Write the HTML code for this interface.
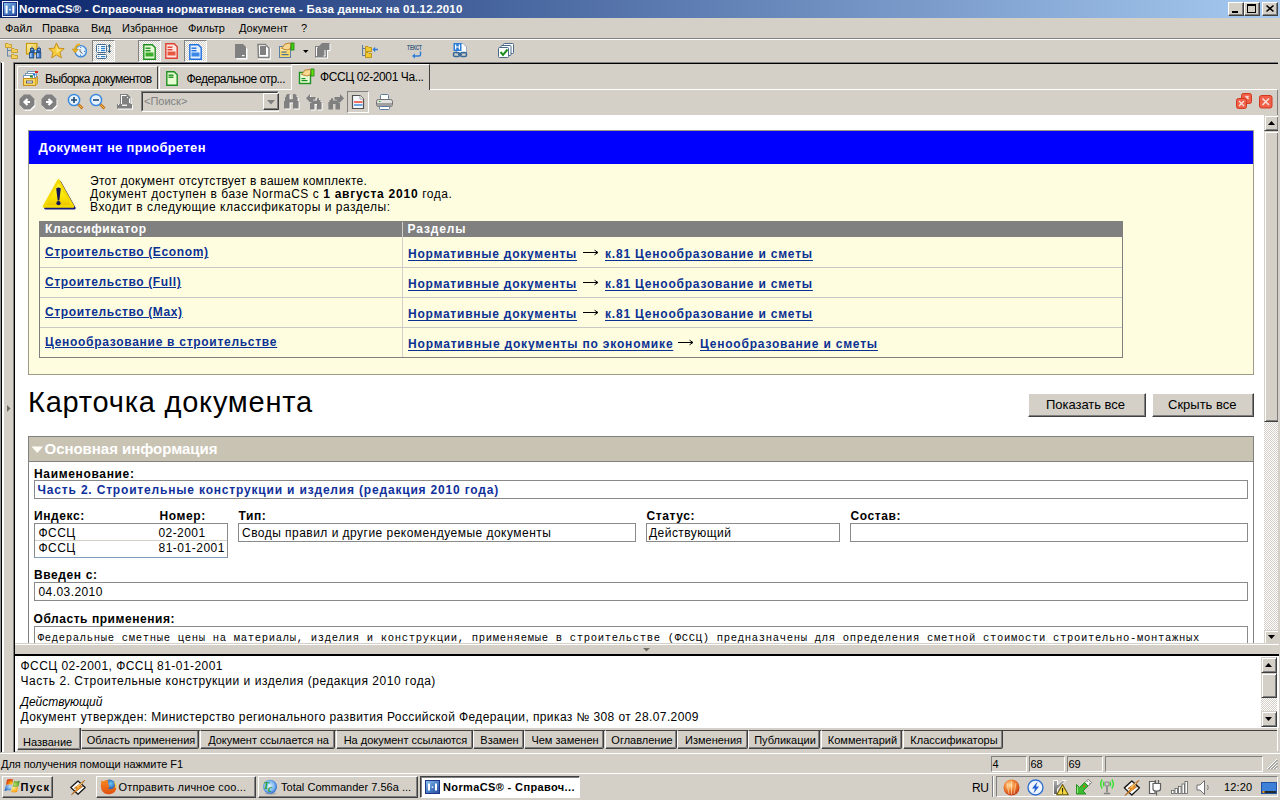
<!DOCTYPE html>
<html><head><meta charset="utf-8"><style>
*{margin:0;padding:0;box-sizing:border-box}
html,body{width:1280px;height:800px;overflow:hidden;background:#D4D0C8;font-family:"Liberation Sans",sans-serif;position:relative}
.a{position:absolute}
.t{position:absolute;white-space:nowrap;line-height:1}
.raised{background:#D4D0C8;border-style:solid;border-width:1px;border-color:#fff #404040 #404040 #fff;box-shadow:inset -1px -1px 0 #808080}
.sunk{border-style:solid;border-width:1px;border-color:#808080 #fff #fff #808080}
.lnk{color:#0B3193;text-decoration:underline;text-underline-offset:1.5px}
.fb{position:absolute;border:1px solid #8A8A8A;background:#fff}
.chk{background-color:#fff;background-image:linear-gradient(45deg,#D4D0C8 25%,transparent 25%,transparent 75%,#D4D0C8 75%),linear-gradient(45deg,#D4D0C8 25%,transparent 25%,transparent 75%,#D4D0C8 75%);background-size:2px 2px;background-position:0 0,1px 1px}
.sbt{background:#D4D0C8;border-style:solid;border-width:1px;border-color:#D4D0C8 #404040 #404040 #D4D0C8;box-shadow:inset 1px 1px 0 #fff,inset -1px -1px 0 #808080}
.pressed{border-style:solid;border-width:1px;border-color:#808080 #fff #fff #808080}
svg{position:absolute;overflow:visible}
</style></head><body>
<div class="a" style="left:0px;top:0px;width:1280px;height:18px;background:linear-gradient(90deg,#0A246A 0%,#A6CAF0 100%);"></div>
<svg style="left:2px;top:1px" width="16" height="16" viewBox="0 0 16 16"><defs><linearGradient id="ai" x1="0" y1="0" x2="1" y2="1"><stop offset="0" stop-color="#8CC0EC"/><stop offset="0.5" stop-color="#4A80C8"/><stop offset="1" stop-color="#2A4EA0"/></linearGradient></defs><rect x="0" y="0" width="16" height="16" fill="#F0F4FA"/><rect x="1" y="1" width="14" height="14" fill="#1E3488"/><rect x="2" y="2" width="12" height="12" fill="url(#ai)"/><rect x="3.6" y="4.6" width="2" height="7.8" fill="#fff"/><rect x="10.3" y="4.6" width="2" height="7.8" fill="#fff"/><rect x="7.2" y="7.8" width="1.6" height="1.6" fill="#E8F0FC"/></svg>
<div class="t" style="left:19px;top:4px;font-size:11.5px;color:#fff;font-weight:bold;letter-spacing:0.20px;">NormaCS® - Справочная нормативная система - База данных на 01.12.2010</div><div class="a raised" style="left:1228px;top:2px;width:16px;height:14px"></div><div class="a raised" style="left:1244px;top:2px;width:16px;height:14px"></div><div class="a raised" style="left:1262px;top:2px;width:16px;height:14px"></div><div class="a" style="left:1232px;top:11px;width:6px;height:2px;background:#000;"></div>
<div class="a" style="left:1247px;top:4px;width:9px;height:9px;background:transparent;border:1px solid #000;border-top-width:2px"></div>
<svg style="left:1266px;top:5px" width="8" height="7"><path d="M0.5 0.5 L7.5 6.5 M7.5 0.5 L0.5 6.5" stroke="#000" stroke-width="1.6"/></svg><div class="t" style="left:5px;top:23px;font-size:11px;color:#000;">Файл</div><div class="t" style="left:42px;top:23px;font-size:11px;color:#000;">Правка</div><div class="t" style="left:91px;top:23px;font-size:11px;color:#000;">Вид</div><div class="t" style="left:122px;top:23px;font-size:11px;color:#000;">Избранное</div><div class="t" style="left:188px;top:23px;font-size:11px;color:#000;">Фильтр</div><div class="t" style="left:239px;top:23px;font-size:11px;color:#000;">Документ</div><div class="t" style="left:301px;top:23px;font-size:11px;color:#000;">?</div><div class="a" style="left:0px;top:38px;width:1280px;height:1px;background:#808080;"></div>
<div class="a" style="left:0px;top:39px;width:1280px;height:1px;background:#fff;"></div>
<div class="a chk" style="left:92px;top:40px;width:23px;height:22px;border-style:solid;border-width:1px;border-color:#808080 #fff #fff #808080"></div>
<div class="a chk" style="left:138px;top:40px;width:23px;height:22px;border-style:solid;border-width:1px;border-color:#808080 #fff #fff #808080"></div>
<div class="a chk" style="left:184px;top:40px;width:23px;height:22px;border-style:solid;border-width:1px;border-color:#808080 #fff #fff #808080"></div>
<svg style="left:4px;top:42px" width="16" height="17" viewBox="0 0 16 17"><path d="M3.5 5 V14.5 M3.5 8.5 H7 M3.5 14 H7" stroke="#6C88A8" stroke-width="1" fill="none"/><path d="M1.5 1.5 H4 L5 2.5 H7.5 V5.5 H1.5 Z" fill="#F4D060" stroke="#C8A030"/><path d="M7.5 6.5 H10 L11 7.5 H13.5 V10.5 H7.5 Z" fill="#F4D060" stroke="#C8A030"/><path d="M7.5 12.5 H10 L11 13.5 H13.5 V16.5 H7.5 Z" fill="#F4D060" stroke="#C8A030"/></svg>
<svg style="left:24px;top:40px" width="20" height="20" viewBox="0 0 20 20"><defs><linearGradient id="bfg" x1="0" y1="0" x2="1" y2="1"><stop offset="0" stop-color="#FFF6B0"/><stop offset="1" stop-color="#E8B820"/></linearGradient></defs><rect x="2.5" y="3.5" width="10.5" height="10.5" fill="url(#bfg)" stroke="#C8980C" stroke-width="1.2"/><path d="M7 9 L8 6 L9 9 Z M14 9 L15 6 L16 9 Z" fill="#1E4A80"/><rect x="6.5" y="8.5" width="3" height="3.5" fill="#2E6AB8" stroke="#1E4A80" stroke-width="0.8"/><rect x="13.5" y="8.5" width="3" height="3.5" fill="#2E6AB8" stroke="#1E4A80" stroke-width="0.8"/><rect x="9.5" y="10" width="4" height="2.5" fill="#4A88D8" stroke="#1E4A80" stroke-width="0.6"/><rect x="11" y="10.5" width="1" height="1.6" fill="#fff"/><rect x="5.4" y="12.4" width="4.4" height="5.6" fill="#3C7CD0" stroke="#1E4A80" stroke-width="0.8"/><rect x="12.4" y="12.4" width="4.4" height="5.6" fill="#3C7CD0" stroke="#1E4A80" stroke-width="0.8"/><rect x="6.3" y="13.2" width="1.1" height="3.8" fill="#D0E6FF"/><rect x="13.3" y="13.2" width="1.1" height="3.8" fill="#D0E6FF"/><circle cx="8" cy="9.3" r="0.6" fill="#fff"/><circle cx="15" cy="9.3" r="0.6" fill="#fff"/></svg>
<svg style="left:48px;top:42px" width="17" height="17" viewBox="0 0 17 17"><path d="M8.5 1 L10.8 6.2 L16.2 6.6 L12 10.2 L13.4 15.8 L8.5 12.8 L3.6 15.8 L5 10.2 L0.8 6.6 L6.2 6.2 Z" fill="#F6CC3C" stroke="#C8901A" stroke-width="1"/><path d="M8.5 3.5 L10 7.5 L13.5 7.8 L8.5 11 Z" fill="#FFF0A0" opacity="0.7"/></svg>
<svg style="left:68px;top:40px" width="20" height="20" viewBox="0 0 20 20"><circle cx="12.75" cy="11.25" r="5.6" fill="#E4F0FC" stroke="#3A88D8" stroke-width="1.4"/><circle cx="12.5" cy="7.5" r="0.6" fill="#2A70C0"/><circle cx="16.5" cy="11.3" r="0.6" fill="#2A70C0"/><circle cx="12.5" cy="15.2" r="0.6" fill="#2A70C0"/><path d="M12 9.3 V11.5 L14.5 13.5" stroke="#505050" stroke-width="0.9" fill="none"/><path d="M12 4.5 Q8 4.5 7.2 8.5 L7.2 9.5" stroke="#E8B020" stroke-width="2" fill="none"/><path d="M4 9 H10.5 L7.2 13 Z" fill="#E8B020" stroke="#C08810" stroke-width="0.5"/></svg>
<svg style="left:92px;top:40px" width="22" height="22" viewBox="0 0 22 22"><rect x="4.5" y="4.5" width="10" height="8" rx="1" fill="#fff" stroke="#4A6A8A"/><circle cx="6.7" cy="6.6" r="0.7" fill="#2A80D0"/><rect x="9" y="6" width="4.2" height="1.2" fill="#2A80D0"/><circle cx="6.7" cy="8.6" r="0.7" fill="#2A80D0"/><rect x="9" y="8" width="4.2" height="1.2" fill="#2A80D0"/><circle cx="6.7" cy="10.6" r="0.7" fill="#2A80D0"/><rect x="9" y="10" width="4.2" height="1.2" fill="#2A80D0"/><rect x="4.5" y="14.5" width="10" height="4" rx="1" fill="#fff" stroke="#4A6A8A"/><circle cx="6.7" cy="16.5" r="0.7" fill="#2A80D0"/><rect x="9" y="16" width="4.2" height="1.2" fill="#2A80D0"/><path d="M17.4 4 L19.4 6.5 H15.4 Z M17.4 13.2 L19.4 10.7 H15.4 Z" fill="#2F5A78"/><rect x="16.9" y="6" width="1" height="5" fill="#2F5A78"/></svg>
<svg style="left:143px;top:44px" width="13" height="16" viewBox="0 0 13 16"><path d="M0.8 0.8 h8.4 l3 3 v11.4 h-11.4 z" fill="#E8FCD8" stroke="#1E9020" stroke-width="1.4"/><rect x="2.5" y="3.5" width="5" height="1.4" fill="#1E9020"/><rect x="2.5" y="6" width="5" height="1.4" fill="#1E9020"/><rect x="2.5" y="8.5" width="8" height="4" fill="#3AAE2A"/></svg>
<svg style="left:165px;top:43px" width="13" height="16" viewBox="0 0 13 16"><path d="M0.8 0.8 h8.4 l3 3 v11.4 h-11.4 z" fill="#FCE4E0" stroke="#E04030" stroke-width="1.4"/><rect x="2.5" y="3.5" width="5" height="1.4" fill="#E04030"/><rect x="2.5" y="6" width="5" height="1.4" fill="#E04030"/><rect x="2.5" y="8.5" width="8" height="4" fill="#E85840"/></svg>
<svg style="left:189px;top:44px" width="13" height="16" viewBox="0 0 13 16"><path d="M0.8 0.8 h8.4 l3 3 v11.4 h-11.4 z" fill="#E4F0FC" stroke="#2070E0" stroke-width="1.4"/><rect x="2.5" y="3.5" width="5" height="1.4" fill="#2070E0"/><rect x="2.5" y="6" width="5" height="1.4" fill="#2070E0"/><rect x="2.5" y="8.5" width="8" height="4" fill="#3A88E8"/></svg>
<svg style="left:234px;top:43px" width="14" height="17" viewBox="0 0 14 17"><path d="M1.5 1.5 H9 L12.5 5 V15.5 H1.5 Z" fill="#fff" transform="translate(1,1)"/><path d="M1 1 H9 L12 4 V15 H1 Z" fill="#808080"/><rect x="8" y="12" width="2.5" height="1.2" fill="#fff"/></svg>
<svg style="left:257px;top:43px" width="14" height="17" viewBox="0 0 14 17"><path d="M2 2 H9.5 L13 5.5 V16 H2 Z" fill="none" stroke="#fff" stroke-width="1.5"/><path d="M1 1.5 H8.5 L12 5 V14.5 H1.5 Z" fill="#fff" stroke="#808080" stroke-width="1.5"/><rect x="3" y="3" width="6" height="9" fill="#808080"/></svg>
<svg style="left:278px;top:42px" width="17" height="17" viewBox="0 0 17 17"><rect x="1.5" y="4.5" width="11" height="11" fill="#F8D868" stroke="#5A80A8"/><rect x="2.5" y="5.5" width="9" height="3" fill="#FFF4C0"/><rect x="3.5" y="9.5" width="5" height="1.2" fill="#4A70A0"/><rect x="3.5" y="12" width="7" height="1.2" fill="#4A70A0"/><path d="M3.5 6.5 L7 2 L12 1 L13 3 L12 7 L9 8 Z" fill="#F8D890" stroke="#B87A20" stroke-width="0.9"/><rect x="13" y="1" width="3" height="7" fill="#40D010" stroke="#208010" stroke-width="0.8"/></svg>
<svg style="left:303px;top:50px" width="6" height="4" viewBox="0 0 6 4"><path d="M0 0 H5.5 L2.75 3 Z" fill="#000"/></svg>
<svg style="left:312px;top:40px" width="22" height="22" viewBox="0 0 22 22"><path transform="translate(1,1)" d="M10 3 H17.5 V10 H15 V17.5 H3 V6 H7 L10 3 Z" fill="#fff"/><path d="M10 3 H17.5 V10 H15 V17.5 H3 V6 H7 L10 3 Z" fill="#808080"/><rect x="4" y="7" width="1" height="9" fill="#fff"/><rect x="4" y="7" width="1.5" height="1" fill="#fff"/><rect x="12.5" y="10" width="1" height="6" fill="#fff"/><rect x="11.5" y="15.5" width="2" height="1" fill="#fff"/></svg>
<svg style="left:360px;top:44px" width="19" height="14" viewBox="0 0 19 14"><path d="M2.5 1 V11.5 H5 M2.5 4.5 H5" stroke="#5878A0" stroke-width="1" fill="none"/><path d="M5.5 2.5 H8 L9 3.5 H11.5 V7.5 H5.5 Z" fill="#F0C830" stroke="#B89010" stroke-width="0.9"/><path d="M5.5 8.5 H8 L9 9.5 H11.5 V13.5 H5.5 Z" fill="#F0C830" stroke="#B89010" stroke-width="0.9"/><path d="M12.5 5.5 L15.2 2.8 V4.8 H18 V6.2 H15.2 V8.2 Z" fill="#2C7CD8"/></svg>
<svg style="left:405px;top:44px" width="19" height="15" viewBox="0 0 19 15"><text x="2" y="6.3" font-family="Liberation Sans" font-size="7.2" font-weight="bold" fill="#3A5A7C" textLength="15" lengthAdjust="spacingAndGlyphs">ТЕКСТ</text><path d="M15.5 7.5 V10.5 Q15.5 12 14 12 H9" stroke="#2C7CD8" stroke-width="1.5" fill="none"/><path d="M7 12 L10 9.5 V14.5 Z" fill="#2C7CD8"/></svg>
<svg style="left:452px;top:42px" width="17" height="17" viewBox="0 0 17 17"><path d="M4.5 1.5 H11 L14.5 5 V11.5 H4.5 Z" fill="#fff" stroke="#98A8B8"/><rect x="1.5" y="1" width="8" height="8" fill="#2C7CD8"/><rect x="3" y="2.5" width="1.2" height="5" fill="#fff"/><rect x="6.8" y="2.5" width="1.2" height="5" fill="#fff"/><rect x="4" y="4.5" width="3" height="1" fill="#fff"/><rect x="1.5" y="10.5" width="6" height="4" rx="1.5" fill="none" stroke="#3A6A98" stroke-width="1.5"/><rect x="8.5" y="10.5" width="6" height="4" rx="1.5" fill="none" stroke="#3A6A98" stroke-width="1.5"/><rect x="6" y="11.8" width="4" height="1.4" fill="#3A6A98"/></svg>
<svg style="left:497px;top:42px" width="18" height="17" viewBox="0 0 18 17"><rect x="6.5" y="1.5" width="10" height="10" rx="1" fill="#fff" stroke="#4A6A8A"/><rect x="4" y="3.5" width="10" height="10" rx="1" fill="#fff" stroke="#4A6A8A"/><rect x="1.5" y="5.5" width="10" height="10" rx="1" fill="#fff" stroke="#4A6A8A"/><path d="M3.5 10 L6 13 L10.5 7.5" stroke="#1E9020" stroke-width="2" fill="none"/></svg>
<div class="a" style="left:0px;top:62px;width:1px;height:691px;background:#909090;"></div>
<div class="a" style="left:1px;top:63px;width:1px;height:689px;background:#000;"></div>
<div class="a" style="left:2px;top:62px;width:2px;height:690px;background:#fff;"></div>
<div class="a" style="left:13px;top:62px;width:1px;height:690px;background:#808080;"></div>
<div class="a" style="left:13px;top:62px;width:1266px;height:1px;background:#808080;"></div>
<div class="a" style="left:14px;top:63px;width:1265px;height:1px;background:#000;"></div>
<div class="a" style="left:14px;top:63px;width:1px;height:689px;background:#000;"></div>
<svg style="left:7px;top:405px" width="4" height="7"><path d="M0 0 L3.5 3.5 L0 7 Z" fill="#6E6E64"/></svg><div class="a" style="left:17px;top:66px;width:141px;height:23px;border-left:1px solid #fff;border-top:1px solid #fff;border-right:1px solid #404040;border-top-left-radius:2px"></div><div class="t" style="left:45px;top:73px;font-size:12px;color:#000;letter-spacing:-0.60px;">Выборка документов</div><div class="a" style="left:159px;top:66px;width:134px;height:23px;border-left:1px solid #fff;border-top:1px solid #fff;border-top-left-radius:2px"></div><div class="t" style="left:186.50px;top:73px;font-size:12px;color:#000;letter-spacing:-0.51px;">Федеральное отр...</div><div class="a" style="left:15px;top:89px;width:277px;height:1px;background:#fff;"></div>
<div class="a" style="left:430px;top:89px;width:847px;height:1px;background:#fff;"></div>
<div class="a" style="left:1278px;top:63px;width:1px;height:52px;background:#fff;"></div>
<div class="a" style="left:1277px;top:90px;width:1px;height:25px;background:#808080;"></div>
<div class="a" style="left:291px;top:64px;width:139px;height:26px;background:#D4D0C8;border-left:1px solid #fff;border-top:1px solid #fff;border-right:1px solid #404040;border-top-left-radius:2px"></div><div class="t" style="left:320px;top:71px;font-size:12px;color:#000;letter-spacing:-0.40px;">ФССЦ 02-2001 Ча...</div><svg style="left:22px;top:70px" width="17" height="17" viewBox="0 0 17 17"><rect x="5.5" y="1.5" width="9" height="6" fill="#fff" stroke="#7898B8"/><rect x="13" y="1" width="3" height="2" fill="#E03020"/><rect x="3.5" y="3.5" width="9" height="6" fill="#fff" stroke="#7898B8"/><rect x="11" y="3.5" width="2.5" height="2" fill="#2C7CD8"/><rect x="1.5" y="5.5" width="9" height="6" fill="#fff" stroke="#7898B8"/><rect x="8" y="5.5" width="2.5" height="2" fill="#1E9020"/><rect x="1.5" y="8.5" width="12" height="7" fill="#F8D860" stroke="#C8901A"/><path d="M13.5 8.5 L15.5 6.5 V13.5 L13.5 15.5" fill="#E8C040" stroke="#C8901A" stroke-width="0.8"/><rect x="4.5" y="11" width="6" height="2" fill="#fff" stroke="#404870" stroke-width="0.8"/></svg>
<svg style="left:166px;top:71px" width="13" height="16" viewBox="0 0 13 16"><path d="M0.8 0.8 h7.4 l3 3 v10.4 h-10.4 z" fill="#E4FCD0" stroke="#1E9020" stroke-width="1.4"/><rect x="2.5" y="3.5" width="5" height="1.4" fill="#1E9020"/><rect x="2.5" y="5.5" width="5" height="1.4" fill="#1E9020"/></svg>
<svg style="left:298px;top:68px" width="17" height="17" viewBox="0 0 17 17"><rect x="1.5" y="4.5" width="11" height="11" fill="#E8FCD8" stroke="#1E9020" stroke-width="1.4"/><rect x="3.5" y="10" width="4" height="1.2" fill="#1E9020"/><rect x="3.5" y="12" width="6" height="1.2" fill="#1E9020"/><path d="M3.5 6.5 L7 2 L12 1.5 L13 3 L12 7 L9 8 Z" fill="#F8D890" stroke="#B87A20" stroke-width="0.9"/><rect x="13" y="1" width="3" height="7" fill="#60E010" stroke="#208010" stroke-width="0.8"/></svg>
<div class="a" style="left:141px;top:91px;width:138px;height:21px;border-style:solid;border-width:1px;border-color:#808080 #fff #fff #808080"></div><div class="a" style="left:142px;top:92px;width:136px;height:19px;border-style:solid;border-width:1px;border-color:#404040 #D4D0C8 #D4D0C8 #404040"></div><div class="t" style="left:144px;top:96px;font-size:11px;color:#808080;">&lt;Поиск&gt;</div><div class="a raised" style="left:263px;top:93px;width:16px;height:17px"></div><svg style="left:267px;top:100px" width="8" height="5"><path d="M0 0 L8 0 L4 4.5 Z" fill="#808080"/></svg><svg style="left:19px;top:94px" width="17" height="17" viewBox="0 0 17 17"><path d="M5 1 H11 L15.5 5.5 V11.5 L11 16 H5 L0.5 11.5 V5.5 Z" fill="#fff" transform="translate(0.8,0.8)"/><path d="M5 0.5 H11 L15.5 5 V11 L11 15.5 H5 L0.5 11 V5 Z" fill="#808080"/><path d="M11 8 H6 M8.5 5 L5.5 8 L8.5 11" stroke="#fff" stroke-width="2.2" fill="none"/></svg>
<svg style="left:41px;top:94px" width="17" height="17" viewBox="0 0 17 17"><path d="M5 1 H11 L15.5 5.5 V11.5 L11 16 H5 L0.5 11.5 V5.5 Z" fill="#fff" transform="translate(0.8,0.8)"/><path d="M5 0.5 H11 L15.5 5 V11 L11 15.5 H5 L0.5 11 V5 Z" fill="#808080"/><path d="M5 8 H10 M7.5 5 L10.5 8 L7.5 11" stroke="#fff" stroke-width="2.2" fill="none"/></svg>
<svg style="left:67px;top:93px" width="18" height="18" viewBox="0 0 18 18"><path d="M10.5 10.5 L15.5 15.5" stroke="#C87018" stroke-width="2.6"/><path d="M11.5 11.5 L15 15" stroke="#F0C040" stroke-width="1"/><circle cx="7" cy="7" r="5.6" fill="#E8F2FC" stroke="#3A8AE0" stroke-width="1.5"/><path d="M4 7 H10 M7 4 V10" stroke="#1E4870" stroke-width="1.6"/></svg>
<svg style="left:89px;top:93px" width="18" height="18" viewBox="0 0 18 18"><path d="M10.5 10.5 L15.5 15.5" stroke="#C87018" stroke-width="2.6"/><path d="M11.5 11.5 L15 15" stroke="#F0C040" stroke-width="1"/><circle cx="7" cy="7" r="5.6" fill="#E8F2FC" stroke="#3A8AE0" stroke-width="1.5"/><path d="M4 7 H10" stroke="#1E4870" stroke-width="1.6"/></svg>
<svg style="left:114px;top:91px" width="22" height="22" viewBox="0 0 22 22"><path transform="translate(1,1)" d="M6 3 H13.5 L16.5 6 V13 H18 V17.5 H3 V13 H6 Z" fill="#fff"/><path d="M6 3 H13.5 L16.5 6 V13 H18 V17.5 H3 V13 H6 Z" fill="#808080"/><rect x="7" y="4" width="1" height="9" fill="#fff"/><rect x="7" y="4" width="5.5" height="1" fill="#fff"/><rect x="13" y="6" width="1" height="1" fill="#fff"/><rect x="15" y="7.5" width="1" height="4.5" fill="#fff"/><rect x="8" y="13.6" width="5" height="1.3" fill="#fff"/><rect x="4" y="13" width="1" height="1" fill="#fff"/></svg>
<svg style="left:282px;top:91px" width="20" height="20" viewBox="0 0 20 20"><path d="M5 3 H7.6 V8.3 H11 V3 H13.6 V4 H14.6 V6 H15.6 V10 H16.6 V17.6 H11 V11.5 H7.6 V17.6 H2 V10 H3 V6 H4 V4 H5 Z" fill="#fff" transform="translate(1,1)"/><path d="M5 3 H7.6 V8.3 H11 V3 H13.6 V4 H14.6 V6 H15.6 V10 H16.6 V17.6 H11 V11.5 H7.6 V17.6 H2 V10 H3 V6 H4 V4 H5 Z" fill="#808080"/></svg>
<svg style="left:304px;top:91px" width="20" height="21" viewBox="0 0 20 21"><path d="M6 3 V6 H11.5 V8.8 H9 V9.5 H13 V7.3 H15 V9 H16.5 V11 H17.6 V18.6 H13 V13 H10.5 V18.6 H6 V12 H7.5 V11.5 H6 L2 7.3 Z" fill="#fff" transform="translate(1,1)"/><path d="M6 3 V6 H11.5 V8.8 H9 V9.5 H13 V7.3 H15 V9 H16.5 V11 H17.6 V18.6 H13 V13 H10.5 V18.6 H6 V12 H7.5 V11.5 H6 L2 7.3 Z" fill="#808080"/></svg>
<svg style="left:326px;top:91px" width="20" height="21" viewBox="0 0 20 21"><g transform="translate(20,0) scale(-1,1)"><path d="M6 3 V6 H11.5 V8.8 H9 V9.5 H13 V7.3 H15 V9 H16.5 V11 H17.6 V18.6 H13 V13 H10.5 V18.6 H6 V12 H7.5 V11.5 H6 L2 7.3 Z" fill="#808080"/></g><g transform="translate(21,1) scale(-1,1)"><path d="M6 3 V6 H11.5 V8.8 H9 V9.5 H13 V7.3 H15 V9 H16.5 V11 H17.6 V18.6 H13 V13 H10.5 V18.6 H6 V12 H7.5 V11.5 H6 L2 7.3 Z" fill="#fff" opacity="0"/></g></svg>
<div class="a" style="left:347px;top:91px;width:22px;height:22px;border-style:solid;border-width:1px;border-color:#808080 #fff #fff #808080"></div>
<svg style="left:351px;top:94px" width="14" height="16" viewBox="0 0 14 16"><path d="M1.5 1.5 H9 L12.5 5 V14.5 H1.5 Z" fill="#F4F8FC" stroke="#505050" stroke-width="1.2"/><path d="M9 1.5 V5 H12.5" fill="#fff" stroke="#909090" stroke-width="0.8"/><rect x="3" y="7" width="8.5" height="2" fill="#F07060"/><rect x="3" y="10" width="8.5" height="2" fill="#70A8E0"/></svg>
<svg style="left:376px;top:94px" width="17" height="16" viewBox="0 0 17 16"><rect x="4.5" y="0.5" width="8" height="5" rx="1" fill="#fff" stroke="#5A7AA0"/><rect x="0.5" y="5.5" width="16" height="7" rx="2" fill="#E0E0E0" stroke="#707070"/><rect x="1" y="9" width="15" height="3" fill="#A0A0A0"/><rect x="3" y="7" width="1.5" height="1" fill="#20B020"/><rect x="3.5" y="12.5" width="10" height="3" rx="1" fill="#fff" stroke="#5A7AA0"/></svg>
<svg style="left:1236px;top:93px" width="18" height="17" viewBox="0 0 18 17"><rect x="5.5" y="0.5" width="10" height="10" rx="2" fill="#F06048" stroke="#D03820"/><rect x="0.5" y="5.5" width="10" height="10" rx="2" fill="#F06048" stroke="#D03820"/><path d="M3 8 L8 13 M8 8 L3 13 M9.5 3 L12.5 6 M12.5 3 L10.5 5" stroke="#F8E0D8" stroke-width="1.4"/></svg>
<svg style="left:1259px;top:95px" width="14" height="14" viewBox="0 0 14 14"><rect x="0.5" y="0.5" width="12.5" height="12.5" rx="2" fill="#F06048" stroke="#D03820"/><path d="M3.5 3.5 L10 10 M10 3.5 L3.5 10" stroke="#F8E0D8" stroke-width="1.6"/></svg>
<div class="a" style="left:15px;top:115px;width:1249px;height:528px;background:#fff;"></div>
<div class="a" style="left:0;top:0;width:1280px;height:800px;clip-path:inset(115px 16px 157px 15px)"><div class="a" style="left:28px;top:130px;width:1226px;height:245px;border:1px solid #9D9B87;background:#FFFDE0"></div><div class="a" style="left:29px;top:131px;width:1224px;height:33px;background:#0000FF;"></div>
<div class="t" style="left:38.50px;top:141px;font-size:13px;color:#fff;font-weight:bold;letter-spacing:0.31px;">Документ не приобретен</div><svg style="left:40px;top:176px" width="40" height="40" viewBox="0 0 40 40"><defs><linearGradient id="wg" x1="0" y1="0" x2="0" y2="1"><stop offset="0" stop-color="#FFFF40"/><stop offset="0.7" stop-color="#F8E000"/><stop offset="1" stop-color="#E8C000"/></linearGradient></defs><path d="M18.5 4.5 L33 30.5 L4 30.5 Z" fill="#1A1A78" stroke="#1A1A78" stroke-width="2.6" stroke-linejoin="round" transform="translate(1.4,1.6)"/><path d="M18.5 4.5 L33 30.5 L4 30.5 Z" fill="url(#wg)" stroke="#F4DA00" stroke-width="2.6" stroke-linejoin="round"/><path d="M16.2 12.5 Q18.5 10.5 20.8 12.5 L19.3 24.5 H17.7 Z" fill="#14145A"/><circle cx="18.5" cy="27.2" r="2.1" fill="#14145A"/></svg>
<div class="t" style="left:90px;top:175px;font-size:12px;color:#000;letter-spacing:0.30px;">Этот документ отсутствует в вашем комплекте.</div><div class="t" style="left:90px;top:188px;font-size:12px;letter-spacing:0.53px">Документ доступен в базе NormaCS с <b style="letter-spacing:0.75px">1 августа 2010</b> года.</div><div class="t" style="left:90px;top:201px;font-size:12px;color:#000;letter-spacing:0.51px;">Входит в следующие классификаторы и разделы:</div><div class="a" style="left:39px;top:221px;width:1084px;height:137px;border:1px solid #808080;border-top:0"></div><div class="a" style="left:39px;top:221px;width:1084px;height:16px;background:#808080;"></div>
<div class="a" style="left:402px;top:222px;width:1px;height:15px;background:#D4D0C8;"></div>
<div class="a" style="left:402px;top:237px;width:1px;height:120px;background:#D4D0C8;"></div>
<div class="a" style="left:40px;top:267px;width:1082px;height:1px;background:#C8C8C8;"></div>
<div class="a" style="left:40px;top:297px;width:1082px;height:1px;background:#C8C8C8;"></div>
<div class="a" style="left:40px;top:327px;width:1082px;height:1px;background:#C8C8C8;"></div>
<div class="t" style="left:45px;top:223px;font-size:12px;color:#fff;font-weight:bold;letter-spacing:0.64px;">Классификатор</div><div class="t" style="left:407.50px;top:223px;font-size:12px;color:#fff;font-weight:bold;letter-spacing:0.87px;">Разделы</div><div class="t" style="left:45px;top:246px;font-size:12px;color:#0B3193;font-weight:bold;letter-spacing:0.62px;color:#0B3193;text-decoration:underline;text-underline-offset:1px;">Строительство (Econom)</div><div class="t" style="left:45px;top:276px;font-size:12px;color:#0B3193;font-weight:bold;letter-spacing:0.62px;color:#0B3193;text-decoration:underline;text-underline-offset:1px;">Строительство (Full)</div><div class="t" style="left:45px;top:306px;font-size:12px;color:#0B3193;font-weight:bold;letter-spacing:0.62px;color:#0B3193;text-decoration:underline;text-underline-offset:1px;">Строительство (Max)</div><div class="t" style="left:45px;top:336px;font-size:12px;color:#0B3193;font-weight:bold;letter-spacing:0.72px;color:#0B3193;text-decoration:underline;text-underline-offset:1px;">Ценообразование в строительстве</div><div class="t" style="left:408px;top:248px;font-size:12px;font-weight:bold"><span class="lnk" style="letter-spacing:0.76px">Нормативные документы</span></div><svg style="left:583px;top:249px" width="16" height="7"><path d="M0 3.5 H14.5" stroke="#000" stroke-width="1" fill="none"/><path d="M11.5 1.2 L15 3.5 L11.5 5.8" stroke="#000" stroke-width="1" fill="none"/></svg><div class="t" style="left:605px;top:248px;font-size:12px;font-weight:bold"><span class="lnk" style="letter-spacing:0.8px">к.81 Ценообразование и сметы</span></div><div class="t" style="left:408px;top:278px;font-size:12px;font-weight:bold"><span class="lnk" style="letter-spacing:0.76px">Нормативные документы</span></div><svg style="left:583px;top:279px" width="16" height="7"><path d="M0 3.5 H14.5" stroke="#000" stroke-width="1" fill="none"/><path d="M11.5 1.2 L15 3.5 L11.5 5.8" stroke="#000" stroke-width="1" fill="none"/></svg><div class="t" style="left:605px;top:278px;font-size:12px;font-weight:bold"><span class="lnk" style="letter-spacing:0.8px">к.81 Ценообразование и сметы</span></div><div class="t" style="left:408px;top:308px;font-size:12px;font-weight:bold"><span class="lnk" style="letter-spacing:0.76px">Нормативные документы</span></div><svg style="left:583px;top:309px" width="16" height="7"><path d="M0 3.5 H14.5" stroke="#000" stroke-width="1" fill="none"/><path d="M11.5 1.2 L15 3.5 L11.5 5.8" stroke="#000" stroke-width="1" fill="none"/></svg><div class="t" style="left:605px;top:308px;font-size:12px;font-weight:bold"><span class="lnk" style="letter-spacing:0.8px">к.81 Ценообразование и сметы</span></div><div class="t" style="left:408px;top:338px;font-size:12px;font-weight:bold"><span class="lnk" style="letter-spacing:0.82px">Нормативные документы по экономике</span></div><svg style="left:678px;top:339px" width="16" height="7"><path d="M0 3.5 H14.5" stroke="#000" stroke-width="1" fill="none"/><path d="M11.5 1.2 L15 3.5 L11.5 5.8" stroke="#000" stroke-width="1" fill="none"/></svg><div class="t" style="left:700px;top:338px;font-size:12px;font-weight:bold"><span class="lnk" style="letter-spacing:0.8px">Ценообразование и сметы</span></div><div class="t" style="left:28px;top:387.50px;font-size:29px;color:#000;letter-spacing:0.77px;">Карточка документа</div><div class="a raised" style="left:1028px;top:393px;width:118px;height:24px"></div><div class="t" style="left:1046px;top:398px;font-size:13px;color:#000;letter-spacing:-0.03px;">Показать все</div><div class="a raised" style="left:1152px;top:393px;width:102px;height:24px"></div><div class="t" style="left:1168px;top:398px;font-size:13px;color:#000;letter-spacing:0.00px;">Скрыть все</div><div class="a" style="left:28px;top:436px;width:1226px;height:400px;border:1px solid #808080;background:#fff"></div><div class="a" style="left:28px;top:436px;width:1226px;height:26px;border:1px solid #808080;background:#C9C3B3"></div><svg style="left:31px;top:446px" width="13" height="8"><path d="M0.5 0.5 L12 0.5 L6.25 7 Z" fill="#FFFDF5"/></svg><div class="t" style="left:44.50px;top:441px;font-size:15px;color:#fff;font-weight:bold;letter-spacing:-0.03px;">Основная информация</div><div class="t" style="left:34px;top:468px;font-size:12px;color:#000;font-weight:bold;letter-spacing:0.66px;">Наименование:</div><div class="fb" style="left:34px;top:480px;width:1214px;height:19px"></div><div class="t" style="left:37.60px;top:484px;font-size:12px;color:#10309A;font-weight:bold;letter-spacing:0.82px;">Часть 2. Строительные конструкции и изделия (редакция 2010 года)</div><div class="t" style="left:34px;top:510px;font-size:12px;color:#000;font-weight:bold;letter-spacing:0.60px;">Индекс:</div><div class="t" style="left:159.50px;top:510px;font-size:12px;color:#000;font-weight:bold;letter-spacing:0.60px;">Номер:</div><div class="t" style="left:238.50px;top:510px;font-size:12px;color:#000;font-weight:bold;letter-spacing:0.60px;">Тип:</div><div class="t" style="left:646.50px;top:510px;font-size:12px;color:#000;font-weight:bold;letter-spacing:0.60px;">Статус:</div><div class="t" style="left:850.50px;top:510px;font-size:12px;color:#000;font-weight:bold;letter-spacing:0.60px;">Состав:</div><div class="fb" style="left:34px;top:523px;width:194px;height:35px;border-bottom-color:#7F9DB9"></div><div class="a" style="left:35px;top:540px;width:192px;height:1px;background:#D4D0C8;"></div>
<div class="t" style="left:38.50px;top:527px;font-size:12px;color:#000;letter-spacing:0.42px;">ФССЦ</div><div class="t" style="left:158.50px;top:527px;font-size:12px;color:#000;letter-spacing:0.42px;">02-2001</div><div class="t" style="left:38.50px;top:542px;font-size:12px;color:#000;letter-spacing:0.42px;">ФССЦ</div><div class="t" style="left:158.50px;top:542px;font-size:12px;color:#000;letter-spacing:0.51px;">81-01-2001</div><div class="fb" style="left:238px;top:523px;width:398px;height:19px"></div><div class="t" style="left:242px;top:527px;font-size:12px;color:#000;letter-spacing:0.47px;">Своды правил и другие рекомендуемые документы</div><div class="fb" style="left:646px;top:523px;width:194px;height:19px"></div><div class="t" style="left:649px;top:527px;font-size:12px;color:#000;letter-spacing:0.46px;">Действующий</div><div class="fb" style="left:850px;top:523px;width:398px;height:19px"></div><div class="t" style="left:34px;top:569px;font-size:12px;color:#000;font-weight:bold;letter-spacing:0.60px;">Введен с:</div><div class="fb" style="left:34px;top:582px;width:1214px;height:19px"></div><div class="t" style="left:38.50px;top:586px;font-size:12px;color:#000;letter-spacing:0.42px;">04.03.2010</div><div class="t" style="left:33.50px;top:613px;font-size:12px;color:#000;font-weight:bold;letter-spacing:0.55px;">Область применения:</div><div class="fb" style="left:34px;top:626px;width:1214px;height:40px"></div><div class="t" style="left:37.75px;top:633px;font-size:10.5px;color:#000;font-family:'Liberation Mono',monospace;letter-spacing:0.70px;">Федеральные сметные цены на материалы, изделия и конструкции, применяемые в строительстве (ФССЦ) предназначены для определения сметной стоимости строительно-монтажных</div></div><div class="a" style="left:1278px;top:62px;width:2px;height:691px;background:#D4D0C8;"></div>
<div class="a chk" style="left:1264px;top:115px;width:14px;height:528px"></div><div class="a sbt" style="left:1264px;top:115px;width:14px;height:16px;border-right:0"></div><svg style="left:1268px;top:121px" width="7" height="4"><path d="M3.5 0 L7 4 L0 4 Z" fill="#000"/></svg><div class="a sbt" style="left:1264px;top:131px;width:14px;height:291px;border-right:0"></div><div class="a sbt" style="left:1264px;top:630px;width:14px;height:13px;border-right:0;border-bottom:0;box-shadow:inset 1px 1px 0 #fff"></div><svg style="left:1268px;top:635px" width="7" height="4"><path d="M0 0 L7 0 L3.5 4 Z" fill="#000"/></svg><div class="a" style="left:15px;top:644px;width:1264px;height:1px;background:#fff;"></div>
<svg style="left:643px;top:648px" width="7" height="4"><path d="M0 0 L7 0 L3.5 3.5 Z" fill="#6E6E64"/></svg><div class="a" style="left:14px;top:654px;width:1265px;height:2px;background:#000;"></div>
<div class="a" style="left:15px;top:656px;width:1264px;height:73px;background:#fff;"></div>
<div class="a" style="left:15px;top:728px;width:1264px;height:1px;background:#D4D0C8;"></div>
<div class="t" style="left:20.50px;top:660px;font-size:12px;color:#000;letter-spacing:0.45px;">ФССЦ 02-2001, ФССЦ 81-01-2001</div><div class="t" style="left:20.50px;top:675px;font-size:12px;color:#000;letter-spacing:0.53px;">Часть 2. Строительные конструкции и изделия (редакция 2010 года)</div><div class="t" style="left:20.50px;top:696px;font-size:12px;color:#000;font-style:italic;letter-spacing:-0.03px;">Действующий</div><div class="t" style="left:20.50px;top:710.50px;font-size:12px;color:#000;letter-spacing:0.40px;">Документ утвержден: Министерство регионального развития Российской Федерации, приказ № 308 от 28.07.2009</div><div class="a" style="left:1277px;top:656px;width:1px;height:95px;background:#fff;"></div>
<div class="a chk" style="left:1261px;top:657px;width:16px;height:70px"></div><div class="a sbt" style="left:1261px;top:657px;width:16px;height:16px"></div><svg style="left:1265px;top:663px" width="7" height="4"><path d="M3.5 0 L7 4 L0 4 Z" fill="#000"/></svg><div class="a sbt" style="left:1261px;top:673px;width:16px;height:25px"></div><div class="a sbt" style="left:1261px;top:711px;width:16px;height:16px"></div><svg style="left:1265px;top:717px" width="7" height="4"><path d="M0 0 L7 0 L3.5 4 Z" fill="#000"/></svg><div class="a" style="left:81px;top:730px;width:1196px;height:1px;background:#404040;"></div>
<div class="a" style="left:15px;top:728px;width:2px;height:23px;background:#fff;"></div>
<div class="a" style="left:81px;top:730px;width:118px;height:19px;background:#D4D0C8;border-top:1px solid #404040;border-left:1px solid #fff;border-right:1px solid #404040;border-bottom:1px solid #404040;border-bottom-right-radius:2px;box-shadow:inset -1px -1px 0 #808080"></div><div class="t" style="left:82px;width:118px;text-align:center;top:735px;font-size:11px">Область применения</div><div class="a" style="left:200px;top:730px;width:135px;height:19px;background:#D4D0C8;border-top:1px solid #404040;border-left:1px solid #fff;border-right:1px solid #404040;border-bottom:1px solid #404040;border-bottom-right-radius:2px;box-shadow:inset -1px -1px 0 #808080"></div><div class="t" style="left:201px;width:135px;text-align:center;top:735px;font-size:11px">Документ ссылается на</div><div class="a" style="left:336px;top:730px;width:137px;height:19px;background:#D4D0C8;border-top:1px solid #404040;border-left:1px solid #fff;border-right:1px solid #404040;border-bottom:1px solid #404040;border-bottom-right-radius:2px;box-shadow:inset -1px -1px 0 #808080"></div><div class="t" style="left:337px;width:137px;text-align:center;top:735px;font-size:11px">На документ ссылаются</div><div class="a" style="left:473px;top:730px;width:51px;height:19px;background:#D4D0C8;border-top:1px solid #404040;border-left:1px solid #fff;border-right:1px solid #404040;border-bottom:1px solid #404040;border-bottom-right-radius:2px;box-shadow:inset -1px -1px 0 #808080"></div><div class="t" style="left:474px;width:51px;text-align:center;top:735px;font-size:11px">Взамен</div><div class="a" style="left:524px;top:730px;width:80px;height:19px;background:#D4D0C8;border-top:1px solid #404040;border-left:1px solid #fff;border-right:1px solid #404040;border-bottom:1px solid #404040;border-bottom-right-radius:2px;box-shadow:inset -1px -1px 0 #808080"></div><div class="t" style="left:525px;width:80px;text-align:center;top:735px;font-size:11px">Чем заменен</div><div class="a" style="left:605px;top:730px;width:72px;height:19px;background:#D4D0C8;border-top:1px solid #404040;border-left:1px solid #fff;border-right:1px solid #404040;border-bottom:1px solid #404040;border-bottom-right-radius:2px;box-shadow:inset -1px -1px 0 #808080"></div><div class="t" style="left:606px;width:72px;text-align:center;top:735px;font-size:11px">Оглавление</div><div class="a" style="left:677px;top:730px;width:71px;height:19px;background:#D4D0C8;border-top:1px solid #404040;border-left:1px solid #fff;border-right:1px solid #404040;border-bottom:1px solid #404040;border-bottom-right-radius:2px;box-shadow:inset -1px -1px 0 #808080"></div><div class="t" style="left:678px;width:71px;text-align:center;top:735px;font-size:11px">Изменения</div><div class="a" style="left:748px;top:730px;width:72px;height:19px;background:#D4D0C8;border-top:1px solid #404040;border-left:1px solid #fff;border-right:1px solid #404040;border-bottom:1px solid #404040;border-bottom-right-radius:2px;box-shadow:inset -1px -1px 0 #808080"></div><div class="t" style="left:749px;width:72px;text-align:center;top:735px;font-size:11px">Публикации</div><div class="a" style="left:821px;top:730px;width:81px;height:19px;background:#D4D0C8;border-top:1px solid #404040;border-left:1px solid #fff;border-right:1px solid #404040;border-bottom:1px solid #404040;border-bottom-right-radius:2px;box-shadow:inset -1px -1px 0 #808080"></div><div class="t" style="left:822px;width:81px;text-align:center;top:735px;font-size:11px">Комментарий</div><div class="a" style="left:903px;top:730px;width:100px;height:19px;background:#D4D0C8;border-top:1px solid #404040;border-left:1px solid #fff;border-right:1px solid #404040;border-bottom:1px solid #404040;border-bottom-right-radius:2px;box-shadow:inset -1px -1px 0 #808080"></div><div class="t" style="left:904px;width:100px;text-align:center;top:735px;font-size:11px">Классификаторы</div><div class="a" style="left:17px;top:728px;width:64px;height:22px;border-bottom-right-radius:2px;background:#D4D0C8;border-left:1px solid #fff;border-right:1px solid #404040;border-bottom:1px solid #404040;box-shadow:inset -1px -1px 0 #808080"></div><div class="t" style="left:23px;top:737px;font-size:11px;color:#000;">Название</div><div class="a" style="left:0px;top:753px;width:1280px;height:1px;background:#fff;"></div>
<div class="t" style="left:1px;top:759px;font-size:11px;color:#000;letter-spacing:-0.06px;">Для получения помощи нажмите F1</div><div class="a sunk" style="left:991px;top:756px;width:36px;height:16px"></div><div class="t" style="left:992.50px;top:759px;font-size:11px;color:#000;">4</div><div class="a sunk" style="left:1029px;top:756px;width:36px;height:16px"></div><div class="t" style="left:1030.50px;top:759px;font-size:11px;color:#000;">68</div><div class="a sunk" style="left:1067px;top:756px;width:36px;height:16px"></div><div class="t" style="left:1068.50px;top:759px;font-size:11px;color:#000;">69</div><div class="a sunk" style="left:1105px;top:756px;width:158px;height:16px"></div><svg style="left:1266px;top:758px" width="12" height="12"><path d="M11 1 L1 11 M11 4 L4 11 M11 7 L7 11 M11 10 L10 11" stroke="#fff" stroke-width="1"/><path d="M11.5 2 L2 11.5 M11.5 5 L5 11.5 M11.5 8 L8 11.5" stroke="#808080" stroke-width="1"/></svg><div class="a" style="left:0px;top:773px;width:1280px;height:1px;background:#fff;"></div>
<div class="a raised" style="left:2px;top:776px;width:51px;height:22px"></div><div class="t" style="left:20.50px;top:782px;font-size:11px;color:#000;font-weight:bold;letter-spacing:1.04px;">Пуск</div><div class="a raised" style="left:96px;top:776px;width:160px;height:22px"></div><div class="t" style="left:118.50px;top:782px;font-size:11px;color:#000;letter-spacing:0.15px;">Отправить личное соо...</div><div class="a raised" style="left:258px;top:776px;width:160px;height:22px"></div><div class="t" style="left:281px;top:782px;font-size:11px;color:#000;letter-spacing:0.02px;">Total Commander 7.56a ...</div><div class="a" style="left:420px;top:776px;width:160px;height:22px;background:#fff;border-style:solid;border-width:1px;border-color:#404040 #fff #fff #404040;box-shadow:inset 1px 1px 0 #808080"></div><div class="t" style="left:443px;top:782px;font-size:11px;color:#000;font-weight:bold;letter-spacing:0.37px;">NormaCS® - Справоч...</div><div class="a" style="left:259px;top:777px;width:1px;height:1px;background:transparent;"></div>
<div class="t" style="left:972px;top:782px;font-size:12px;color:#000;letter-spacing:-0.34px;">RU</div><div class="a" style="left:992px;top:776px;width:1px;height:21px;background:#808080;"></div>
<div class="a" style="left:993px;top:776px;width:1px;height:21px;background:#fff;"></div>
<div class="a sunk" style="left:996px;top:776px;width:282px;height:21px"></div><div class="t" style="left:1224px;top:782px;font-size:11px;color:#000;letter-spacing:0.12px;">12:20</div><svg style="left:2px;top:776px" width="20" height="20" viewBox="0 0 20 20"><defs><radialGradient id="wr" cx="0.75" cy="0.75" r="0.8"><stop offset="0" stop-color="#F8C800"/><stop offset="1" stop-color="#D82810"/></radialGradient><radialGradient id="wgr" cx="0.3" cy="0.6" r="0.8"><stop offset="0" stop-color="#B8E060"/><stop offset="1" stop-color="#3A8A20"/></radialGradient><radialGradient id="wb" cx="0.8" cy="0.3" r="0.9"><stop offset="0" stop-color="#C0E4F8"/><stop offset="1" stop-color="#1A60C0"/></radialGradient><radialGradient id="wy" cx="0.3" cy="0.2" r="0.9"><stop offset="0" stop-color="#FFF080"/><stop offset="1" stop-color="#F89000"/></radialGradient></defs><path d="M5 3.8 Q8 2.4 11.2 3.6 L10.2 8.6 Q7.5 7.6 4 8.8 Z" fill="url(#wr)"/><path d="M12 5 Q15 6 17.8 4.8 L16.6 10.3 Q13.8 11.3 10.8 10.4 Z" fill="url(#wgr)"/><path d="M3.8 9.4 Q6.5 8.4 9.6 9.4 L8.6 14.6 Q6 13.6 2.4 15 Z" fill="url(#wb)"/><path d="M10.4 10.8 Q13.2 11.8 16.2 10.6 L15.2 15.8 Q12.2 17 9.2 16 Z" fill="url(#wy)"/></svg>
<svg style="left:71px;top:779.5px" width="15" height="15" viewBox="0 0 15 15"><path d="M7 1 L14.2 7.5 L7 14.2 L-0.2 7.5 Z" fill="#fff" stroke="#181818" stroke-width="1.3" stroke-linejoin="round"/><path d="M13.8 0.3 L3.2 8.2 L6.2 8.2 L0.4 14.8 L11.8 6.4 L8.8 6.4 Z" fill="#F8A028" stroke="#A05008" stroke-width="0.6" stroke-linejoin="round"/><path d="M11 3 L6 7" stroke="#FFE8A0" stroke-width="0.8" fill="none"/></svg>
<svg style="left:100px;top:778px" width="17" height="17" viewBox="0 0 17 17"><defs><radialGradient id="ffg" cx="0.6" cy="0.35" r="0.5"><stop offset="0" stop-color="#70C8F8"/><stop offset="1" stop-color="#1A50A8"/></radialGradient><linearGradient id="ffo" x1="0" y1="0" x2="0" y2="1"><stop offset="0" stop-color="#F88820"/><stop offset="1" stop-color="#E05010"/></linearGradient></defs><circle cx="9.5" cy="7.5" r="6" fill="url(#ffg)"/><path d="M1.5 2 Q3 3.5 4 3.2 Q6 1 8.5 2.8 Q7 4.5 8.5 6.5 Q10 8.5 8.2 10.5 Q10.5 12 13 10.5 Q15 9 15 5.5 Q16.8 8 16.2 11 Q15 15.5 10 16.2 Q4 16.8 1.5 12 Q0.2 8 1.5 2 Z" fill="url(#ffo)"/><path d="M14.5 4 Q16.5 7 15.8 10" stroke="#F8D040" stroke-width="1.2" fill="none"/></svg>
<svg style="left:262px;top:778px" width="17" height="17" viewBox="0 0 17 17"><defs><radialGradient id="tcg" cx="0.45" cy="0.45" r="0.6"><stop offset="0" stop-color="#E8F4FC"/><stop offset="0.6" stop-color="#80B8F0"/><stop offset="1" stop-color="#1A58C8"/></radialGradient></defs><ellipse cx="8.5" cy="15.5" rx="6" ry="1.2" fill="#909090" opacity="0.6"/><circle cx="8" cy="8.8" r="7" fill="url(#tcg)"/><text x="1.2" y="10.5" font-family="Liberation Serif" font-size="10" font-weight="bold" font-style="italic" fill="#20A030">T</text><text x="6" y="13.5" font-family="Liberation Serif" font-size="10" font-weight="bold" font-style="italic" fill="#20A030">c</text></svg>
<svg style="left:425px;top:780px" width="15" height="14" viewBox="0 0 15 14"><defs><linearGradient id="ai2" x1="0" y1="0" x2="1" y2="1"><stop offset="0" stop-color="#8CC0EC"/><stop offset="0.5" stop-color="#4A80C8"/><stop offset="1" stop-color="#2A4EA0"/></linearGradient></defs><rect x="0" y="0" width="15" height="14" fill="#1E3488"/><rect x="1" y="1" width="13" height="12" fill="url(#ai2)"/><rect x="3" y="3.5" width="2" height="7" fill="#fff"/><rect x="10" y="3.5" width="2" height="7" fill="#fff"/><rect x="6.7" y="6.3" width="1.6" height="1.6" fill="#E8F0FC"/></svg>
<svg style="left:1003px;top:779px" width="17" height="17" viewBox="0 0 17 17"><defs><radialGradient id="ob" cx="0.4" cy="0.35" r="0.7"><stop offset="0" stop-color="#FFE0A0"/><stop offset="0.5" stop-color="#F08030"/><stop offset="1" stop-color="#C03010"/></radialGradient></defs><circle cx="8.5" cy="8.5" r="8" fill="url(#ob)"/><path d="M4 4 Q5 10 6 15 M8.5 2 V15.5 M13 4 Q12 10 11 15" stroke="#FFF0D0" stroke-width="0.8" fill="none" opacity="0.7"/></svg>
<svg style="left:1027px;top:779px" width="17" height="17" viewBox="0 0 17 17"><circle cx="8.5" cy="8.5" r="7.5" fill="#F0F4FC" stroke="#3070D0" stroke-width="1.4"/><path d="M10.5 2.5 L5 9.5 H8 L6.5 14.5 L12 7.5 H9 Z" fill="#2060D0"/></svg>
<svg style="left:1052px;top:779px" width="17" height="17" viewBox="0 0 17 17"><defs><linearGradient id="kg" x1="0" y1="0" x2="0" y2="1"><stop offset="0" stop-color="#B0B0B0"/><stop offset="1" stop-color="#606060"/></linearGradient></defs><path d="M1.5 1.5 H5.5 V6 L10 1.5 H14 L8 7.5 L5.5 10 V15.5 H1.5 Z" fill="url(#kg)" stroke="#fff" stroke-width="0.9"/><path d="M10.5 5.5 L16.3 15.8 H4.7 Z" fill="#F4D840" stroke="#6A5810" stroke-width="1.1" stroke-linejoin="round"/><rect x="10" y="9" width="1.1" height="3.8" fill="#202020"/><rect x="10" y="13.5" width="1.1" height="1.1" fill="#202020"/></svg>
<svg style="left:1075px;top:778px" width="17" height="17" viewBox="0 0 17 17"><path d="M9.8 4.6 L13.2 1.2 L16.6 4.6 L13.2 8 Z" fill="#fff" stroke="#707070" stroke-width="0.9"/><rect x="12.3" y="3" width="1" height="1" fill="#707070"/><rect x="14" y="4.6" width="1" height="1" fill="#707070"/><path d="M1.5 6.5 L4.5 9.5 L9.5 4.5 L13 8 L8 13 L11 16 H1.5 Z" fill="#3CBC30" stroke="#1E8A18" stroke-width="0.9" stroke-linejoin="round"/><path d="M2.5 8.5 V15" stroke="#A0E890" stroke-width="0.9"/><circle cx="9" cy="8.2" r="0.9" fill="#F04010"/></svg>
<svg style="left:1099px;top:778px" width="16" height="18" viewBox="0 0 16 18"><path d="M3.2 1.5 Q0 6 3.2 10.5 M5 3.5 Q3.6 6 5 8.5 M12.8 1.5 Q16 6 12.8 10.5 M11 3.5 Q12.4 6 11 8.5" stroke="#38E030" stroke-width="1.4" fill="none"/><circle cx="8" cy="6" r="2.2" fill="#D0D0D0" stroke="#707070" stroke-width="0.9"/><path d="M8 8 V14.5" stroke="#808080" stroke-width="1.6"/><path d="M5.5 15.5 H10.5" stroke="#808080" stroke-width="1.6" stroke-linecap="round"/></svg>
<svg style="left:1124px;top:780px" width="17" height="17" viewBox="0 0 17 17"><g transform="translate(0.5,0) scale(1.05)"><path d="M7 1 L14.2 7.5 L7 14.2 L-0.2 7.5 Z" fill="#fff" stroke="#181818" stroke-width="1.3" stroke-linejoin="round"/><path d="M13.8 0.3 L3.2 8.2 L6.2 8.2 L0.4 14.8 L11.8 6.4 L8.8 6.4 Z" fill="#F8A028" stroke="#A05008" stroke-width="0.6" stroke-linejoin="round"/><path d="M11 3 L6 7" stroke="#FFE8A0" stroke-width="0.8" fill="none"/></g></svg>
<svg style="left:1147px;top:779px" width="16" height="17" viewBox="0 0 16 17"><path d="M2.5 2.5 H8 V14.5 H2.5 Z" fill="#fff" stroke="#606060" stroke-width="1.2"/><path d="M6 4.5 H13.5 V10 Q13.5 12 10 12 H9 Q6 12 6 10 Z" fill="#fff" stroke="#606060" stroke-width="1.2"/><path d="M8.5 1 V4.5 M11.5 1 V4.5 M9.5 12 V16.5" stroke="#606060" stroke-width="1.2"/></svg>
<svg style="left:1171px;top:781px" width="17" height="13" viewBox="0 0 17 13"><rect x="0.5" y="9.5" width="2.5" height="3" fill="#fff" stroke="#606060" stroke-width="0.8"/><rect x="4" y="7.5" width="2.5" height="5" fill="#fff" stroke="#606060" stroke-width="0.8"/><rect x="7.5" y="5.5" width="2.5" height="7" fill="#fff" stroke="#606060" stroke-width="0.8"/><rect x="11" y="3" width="2.5" height="9.5" fill="#fff" stroke="#606060" stroke-width="0.8"/><rect x="14" y="0.5" width="2.5" height="12" fill="#fff" stroke="#606060" stroke-width="0.8"/></svg>
<svg style="left:1196px;top:779px" width="15" height="17" viewBox="0 0 15 17"><path d="M1 6 H4 L8.5 1.5 V15.5 L4 11 H1 Z" fill="#fff" stroke="#707070" stroke-width="1"/><path d="M11.5 6 Q13 8.5 11.5 11" stroke="#808080" stroke-width="1" fill="none"/></svg>
<svg style="left:1261px;top:782px" width="16" height="12" viewBox="0 0 16 12"><rect x="0" y="0" width="16" height="12" fill="#2050A0"/><rect x="1" y="1" width="14" height="8" fill="#3C80D8"/><rect x="1" y="9" width="14" height="2" fill="#202830"/><rect x="1.5" y="9" width="2" height="2" fill="#F0A020"/></svg>

</body></html>
